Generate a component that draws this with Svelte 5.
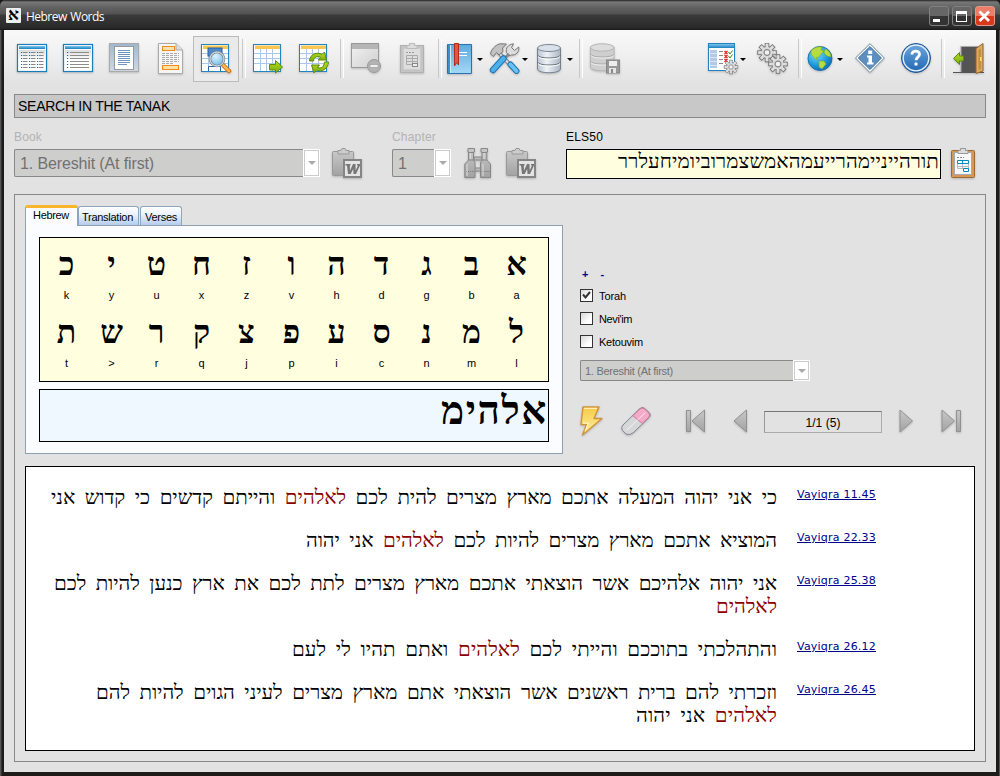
<script>
  const rows = [
    [['כ', 'k'], ['י', 'y'], ['ט', 'u'], ['ח', 'x'], ['ז', 'z'], ['ו', 'v'], ['ה', 'h'], ['ד', 'd'], ['ג', 'g'], ['ב', 'b'], ['א', 'a']],
    [['ת', 't'], ['ש', '>'], ['ר', 'r'], ['ק', 'q'], ['צ', 'j'], ['פ', 'p'], ['ע', 'i'], ['ס', 'c'], ['נ', 'n'], ['מ', 'm'], ['ל', 'l']]
  ];

  const verses = [
    { ref: 'Vayiqra 11.45', lines: [{ w: 726, parts: ['כי אני יהוה המעלה אתכם מארץ מצרים להית לכם ', 'לאלהים', ' והייתם קדשים כי קדוש אני'] }] },
    { ref: 'Vayiqra 22.33', lines: [{ w: 471, parts: ['המוציא אתכם מארץ מצרים להיות לכם ', 'לאלהים', ' אני יהוה'] }] },
    { ref: 'Vayiqra 25.38', lines: [
      { w: 723, parts: ['אני יהוה אלהיכם אשר הוצאתי אתכם מארץ מצרים לתת לכם את ארץ כנען להיות לכם', '', ''] },
      { w: 61, parts: ['', 'לאלהים', ''] }
    ] },
    { ref: 'Vayiqra 26.12', lines: [{ w: 485, parts: ['והתהלכתי בתוככם והייתי לכם ', 'לאלהים', ' ואתם תהיו לי לעם'] }] },
    { ref: 'Vayiqra 26.45', lines: [
      { w: 681, parts: ['וזכרתי להם ברית ראשנים אשר הוצאתי אתם מארץ מצרים לעיני הגוים להיות להם', '', ''] },
      { w: 141, parts: ['', 'לאלהים', ' אני יהוה'] }
    ] }
  ];

  const checks = [['Torah', true, 27], ["Nevi'im", false, 33], ['Ketouvim', false, 44]];

  // Tracks the text so that it spans the given width.
  function fit(node, width) {
    const n = [...node.textContent].length;
    const natural = node.getBoundingClientRect().width;
    node.style.letterSpacing = `${(width - natural) / n}px`;
  }
  const teeth = [0, 45, 90, 135, 180, 225, 270, 315];
  const listRows = [9.5, 12.5, 15.5, 18.5, 21.5, 24.5];
</script>

{#snippet gear(cx, cy, s)}
  <g transform="translate({cx} {cy}) scale({s})">
    {#each teeth as a}<rect x="-1.8" y="-9.5" width="3.6" height="5" fill="#e2e2e2" stroke="#777" stroke-width="1" transform="rotate({a})" />{/each}
    <circle r="6.2" fill="#d8d8d8" stroke="#777" />
    {#each teeth as a}<rect x="-1.3" y="-8.5" width="2.6" height="4" fill="#dedede" transform="rotate({a})" />{/each}
    <circle r="3" fill="#f2f2f2" stroke="#888" stroke-width="1.2" />
  </g>
{/snippet}

{#snippet gridTable()}
  <rect x="1.5" y="1.5" width="27" height="27" fill="#fff" stroke="#2385bd" />
  <rect x="3" y="2.5" width="25" height="3.5" fill="#fac652" />
  <path d="M2 10.5H28M2 15.5H28M2 20.5H28M8.5 6V28M14.5 6V28M20.5 6V28" stroke="#aac8e6" fill="none" />
{/snippet}

{#snippet listFrame()}
  <rect x="1.5" y="1.5" width="29" height="27" fill="#fff" stroke="#1c7db8" stroke-width="1.2" />
  <rect x="3" y="3" width="26" height="3" fill="url(#hdr)" />
  <rect x="3" y="7" width="26" height="20" fill="url(#sheet)" />
{/snippet}

{#snippet pasteWord()}
  <svg width="32" height="32" viewBox="0 0 32 32">
    <rect x="1.5" y="3.5" width="21" height="24" rx="1" fill="url(#gray)" stroke="#999" />
    <path d="M7 6V2.5H10L11 .5H14L15 2.5H18V6Z" fill="#ccc" stroke="#999" />
    <rect x="13" y="12" width="17" height="17" fill="#e4e4e4" stroke="#858585" stroke-width="2" />
    <path d="M14.5 16H19.5V17.5H18.8L19 22.5 22 16H24.5L24.7 22.5 27 17.5H26V16H29V17.5L25 26H22.5L22.2 21 19.7 26H17L16 17.5H14.5Z" fill="#777" />
  </svg>
{/snippet}

{#snippet combo(text, textWidth)}
  <div class="combo-text"><span use:fit={textWidth}>{text}</span></div>
  <div class="combo-btn"><i></i></div>
{/snippet}

<div class="window">
  <svg class="defs" width="0" height="0">
    <defs>
      <linearGradient id="gray" x2="0" y2="1"><stop stop-color="#c8c8c8" /><stop offset="1" stop-color="#a2a2a2" /></linearGradient>
      <linearGradient id="sheet" x2="0" y2="1"><stop stop-color="#dcdcdc" /><stop offset=".5" stop-color="#fff" /></linearGradient>
      <linearGradient id="hdr" x2="0" y2="1"><stop stop-color="#7dc5ee" /><stop offset="1" stop-color="#1c7fc0" /></linearGradient>
      <linearGradient id="sky" x2="0" y2="1"><stop stop-color="#5cabdf" /><stop offset="1" stop-color="#a3d8f5" /></linearGradient>
      <linearGradient id="disk"><stop stop-color="#b9c3d0" /><stop offset=".4" stop-color="#eef2f7" /><stop offset="1" stop-color="#aab5c3" /></linearGradient>
      <linearGradient id="pale" x2="1" y2="1"><stop stop-color="#f2f2f2" /><stop offset="1" stop-color="#cfcfcf" /></linearGradient>
      <linearGradient id="green" x2="0" y2="1"><stop stop-color="#b6dc28" /><stop offset="1" stop-color="#77ad0b" /></linearGradient>
      <linearGradient id="blue" x2="0" y2="1"><stop stop-color="#6fa8dc" /><stop offset="1" stop-color="#1f66b4" /></linearGradient>
      <linearGradient id="page" x2="0" y2="1"><stop stop-color="#9fb8cf" /><stop offset="1" stop-color="#cdd9e4" /></linearGradient>
      <linearGradient id="gold" x2="0" y2="1"><stop stop-color="#f4cb45" /><stop offset="1" stop-color="#fff0a6" /></linearGradient>
      <radialGradient id="sea" cx=".35" cy=".3" r=".8"><stop stop-color="#7fe0ff" /><stop offset=".6" stop-color="#1c98dc" /><stop offset="1" stop-color="#0f62aa" /></radialGradient>
      <radialGradient id="lens" cx=".4" cy=".3" r=".8"><stop stop-color="#dff4ff" /><stop offset="1" stop-color="#62b6e4" /></radialGradient>
    </defs>
  </svg>

  <header class="titlebar">
    <div class="logo">א</div>
    <h1><span use:fit={78}>Hebrew Words</span></h1>
    <div class="win-buttons">
      <b><svg width="19" height="20" viewBox="0 0 19 20"><rect x="4" y="13" width="7" height="3" fill="#fff" /></svg></b>
      <b><svg width="19" height="20" viewBox="0 0 19 20"><path d="M4 5H15V16H4ZM5 8V15H14V8Z" fill="#fff" fill-rule="evenodd" /></svg></b>
      <b class="close"><svg width="19" height="20" viewBox="0 0 19 20"><path d="M4.5 5.5L14 15M14 5.5L4.5 15" stroke="#fff" stroke-width="2.8" /></svg></b>
    </div>
  </header>

  <nav class="toolbar">
    <div class="btn">
      <svg width="32" height="32" viewBox="0 0 32 32">
        {@render listFrame()}
        {#each listRows as y}<path d="M7 {y}H11.500M15 {y}H19.500M23 {y}H27.500" stroke="#888" /><path d="M5 {y}H6.200M13 {y}H14.200M21 {y}H22.200" stroke="#1d5fb0" />{/each}
      </svg>
    </div>
    <div class="btn">
      <svg width="32" height="32" viewBox="0 0 32 32">
        {@render listFrame()}
        {#each listRows as y}<path d="M8 {y}H27" stroke="#8c8c8c" /><path d="M5 {y}H6.200" stroke="#1d5fb0" />{/each}
      </svg>
    </div>
    <div class="btn">
      <svg width="32" height="32" viewBox="0 0 32 32">
        <rect x="1.5" y=".5" width="29" height="28" fill="url(#page)" stroke="#aaa" /><rect x="6.5" y="3.5" width="19" height="23" fill="#fff" stroke="#999" />
        <path d="M10 7.5H22M10 9.5H22M10 11.5H22M10 13.5H22M10 15.5H22M10 17.5H22M10 19.5H22M10 21.5H19" stroke="#6f96be" />
      </svg>
    </div>
    <div class="btn">
      <svg width="32" height="32" viewBox="0 0 32 32">
        <path d="M4.5.5H22L28.5 7V30.5H4.5Z" fill="#f6f6f6" stroke="#aaa" /><path d="M22 .5V7H28.5" fill="#ddd" stroke="#aaa" />
        <rect x="8.5" y="3.5" width="12" height="4" fill="#fde2a6" stroke="#f28a1c" /><rect x="8.5" y="22.5" width="16" height="4" fill="#fde2a6" stroke="#f28a1c" />
        <path d="M8 10.5H25M8 12.5H25M8 14.5H25M8 16.5H25M8 18.5H25M8 20.5H20" stroke="#aaa" stroke-dasharray="3 1" />
      </svg>
    </div>
    <div class="btn active">
      <svg width="32" height="32" viewBox="0 0 32 32">
        {@render gridTable()}
        <rect x="8" y="5" width="14" height="8" fill="#4d88cb" stroke="#245fa5" />
        <path d="M8.5 28V23.5H20.5V28" fill="#fff" stroke="#2765ad" />
        <path d="M23 22L29 28" stroke="#c96d16" stroke-width="4.5" stroke-linecap="round" /><path d="M23 22L29 28" stroke="#ffb54d" stroke-width="2.5" stroke-linecap="round" />
        <circle cx="17" cy="16" r="7" fill="url(#lens)" stroke="#7c8994" stroke-width="2.6" /><circle cx="17" cy="16" r="7" fill="none" stroke="#e2e8ec" />
      </svg>
    </div>
    <div class="sep"></div>
    <div class="btn">
      <svg width="32" height="32" viewBox="0 0 32 32">{@render gridTable()}<path d="M17.5 21.5H23.5V17.5L30.5 24 23.5 30V27H17.5Z" fill="url(#green)" stroke="#5d8a08" /></svg>
    </div>
    <div class="btn">
      <svg width="32" height="32" viewBox="0 0 32 32">
        {@render gridTable()}
        <path d="M11.5 18C12 11 19 8.5 24 11.5L26.5 9 28.5 17H20.5L22.5 14.5C19 12.5 16 14 15.5 18Z" fill="url(#green)" stroke="#5d8a08" />
        <path d="M30.5 19C30 26 24 29.5 18.5 27L16 30 13.5 22H21.5L19.5 24.5C23 26 26 24 26.5 19Z" fill="url(#green)" stroke="#5d8a08" />
      </svg>
    </div>
    <div class="sep"></div>
    <div class="btn">
      <svg width="32" height="32" viewBox="0 0 32 32">
        <rect x="1.5" y=".5" width="27" height="24" fill="url(#pale)" stroke="#999" /><rect x="2" y="1" width="26" height="5" fill="#b5b5b5" />
        <circle cx="24" cy="23" r="6.5" fill="#b3b3b3" stroke="#999" /><rect x="20" y="21.5" width="8" height="3" fill="#eee" stroke="#999" stroke-width=".6" />
      </svg>
    </div>
    <div class="btn">
      <svg width="32" height="32" viewBox="0 0 32 32">
        <rect x="4.5" y="2.5" width="23" height="27" fill="#c4c4c4" stroke="#b0b0b0" /><rect x="7.5" y="5.5" width="17" height="21" fill="#dedede" stroke="#cbcbcb" />
        <path d="M11 5.5V2.5H13.5V.5H18.5V2.5H21V5.5Z" fill="#ddd" stroke="#bbb" /><path d="M10.5 12.5H21.5V21.5H10.5ZM10.5 15.5H21.5M10.5 18.5H21.5M16.5 12V22" fill="none" stroke="#aaa" /><path d="M10 9.5H19" stroke="#999" stroke-dasharray="2 1" /><rect x="16.5" y="20.5" width="5" height="3" fill="#eee" stroke="#888" />
      </svg>
    </div>
    <div class="sep"></div>
    <div class="btn drop">
      <svg width="32" height="32" viewBox="0 0 32 32">
        <path d="M3.5 1.5H27.5V30.5H3.5Z" fill="url(#sky)" stroke="#2672b3" /><path d="M6.5 2V30" stroke="#d1ecfa" /><path d="M4 1.5H6V30H4Z" fill="#3b8fcd" />
        <path d="M10.5.5H14.5V22L12.5 19.5 10.5 23Z" fill="#e8553e" stroke="#b32a1c" /><path d="M15 9.5H23M15 12.5H23" stroke="#fff" />
      </svg><i></i>
    </div>
    <div class="btn drop">
      <svg width="32" height="32" viewBox="0 0 32 32">
        <path d="M10 10L26 27" stroke="#777" stroke-width="4" /><path d="M10 10L26 27" stroke="#ddd" stroke-width="2" />
        <path d="M1.5 11C2 7 6 2 11 .8L17.5 1 13.5 5 14 8.5 10 12 7.5 9.5 4.5 13.5Z" fill="#c2c2c2" stroke="#777" />
        <path d="M21 13L17.5 9.5C16.5 5 19 1.5 24.5.8L22.5 4.5 25.5 7.5 29.8 4C30.5 9 27 12.5 22.5 12Z" fill="#dcdcdc" stroke="#777" />
        <path d="M20 11L13 18" stroke="#888" stroke-width="3" />
        <path d="M21.5 21.5L27.5 28" stroke="#1e74b3" stroke-width="6" stroke-linecap="round" /><path d="M21.5 21.5L27.5 28" stroke="#68c3f3" stroke-width="4" stroke-linecap="round" />
        <path d="M14.5 15.5L4 27" stroke="#1e74b3" stroke-width="6.4" stroke-linecap="round" /><path d="M14.5 15.5L4 27" stroke="#4cb0ea" stroke-width="4.4" stroke-linecap="round" />
      </svg><i></i>
    </div>
    <div class="btn drop">
      <svg width="32" height="32" viewBox="0 0 32 32">
        <path d="M3.5 5V26C3.5 31 26.5 31 26.5 26V5Z" fill="url(#disk)" stroke="#76818e" /><ellipse cx="15" cy="5" rx="11.5" ry="3.5" fill="#dae1ea" stroke="#7d8793" />
        <path d="M3.5 12C4 16 26 16 26.5 12M3.5 19C4 23 26 23 26.5 19" fill="none" stroke="#66717e" /><path d="M4 13.5C5 17 25 17 26 13.5M4 20.5C5 24 25 24 26 20.5" fill="none" stroke="#fff" />
      </svg><i></i>
    </div>
    <div class="sep"></div>
    <div class="btn">
      <svg width="32" height="32" viewBox="0 0 32 32">
        <path d="M1.5 4V24C1.5 29 25 29 25 24V4Z" fill="#cfcfcf" stroke="#b5b5b5" /><ellipse cx="13.2" cy="4.5" rx="11.7" ry="3.7" fill="#ddd" stroke="#b5b5b5" />
        <path d="M1.5 11C2 15 24 15 25 11M1.5 18C2 22 24 22 25 18" fill="none" stroke="#aaa" /><path d="M2 12.5C3 16 24 16 25 12.5M2 19.5C3 23 24 23 25 19.5" fill="none" stroke="#eee" />
        <rect x="17.5" y="17" width="13" height="13" fill="#999" stroke="#888" /><rect x="20" y="18" width="8" height="5" fill="#eee" /><rect x="20" y="25" width="7" height="5" fill="#e5e5e5" /><rect x="22" y="26" width="2" height="4" fill="#888" />
      </svg>
    </div>
    <div class="grow"></div>
    <div class="btn drop">
      <svg width="32" height="32" viewBox="0 0 32 32">
        <rect x="1.5" y=".5" width="26" height="27" fill="#fff" stroke="#2383bc" /><rect x="2" y="1" width="25" height="4" fill="url(#hdr)" /><rect x="3" y="7" width="7" height="18" fill="#b2cae8" /><path d="M3 10.5H10M3 14.5H10M3 18.5H10M3 22.5H10" stroke="#d8e5f4" />
        <path d="M12 8.5H16M12 12.5H16M12 16.5H16M12 20.5H16" stroke="#888" /><path d="M17.5 8L20.5 11M20.5 8L17.5 11M17.5 12L20.5 15M20.5 12L17.5 15M17.5 16L20.5 19M20.5 16L17.5 19" stroke="#e5231b" stroke-width="1.4" /><path d="M21.5 9L23 11 25.5 7.5M21.5 13L23 15 25.5 11.5" fill="none" stroke="#37831c" />
        {@render gear(24, 24, 0.72)}
      </svg><i></i>
    </div>
    <div class="btn"><svg width="32" height="32" viewBox="0 0 32 32">{@render gear(11, 9.5, 0.98)}{@render gear(22, 21, 0.98)}</svg></div>
    <div class="sep"></div>
    <div class="btn drop">
      <svg width="32" height="32" viewBox="0 0 32 32">
        <circle cx="16" cy="15.5" r="12" fill="url(#sea)" stroke="#1c71a9" />
        <path d="M7 8C10 4 15 3.5 18 4L17 7 20 8 17 11 15 14 12 14.5 14 17 11 16 7 11ZM15 18L20 18 22 21 18 26 15 24ZM21 6C25 7 27 11 27 14L23 13 20 10Z" fill="#b7dc3d" stroke="#74a927" stroke-width=".6" />
      </svg><i></i>
    </div>
    <div class="btn">
      <svg width="32" height="32" viewBox="0 0 32 32">
        <path d="M17 .7L31.3 15 17 29.5 2.5 15Z" fill="#fff" stroke="#6c8ba8" stroke-linejoin="round" /><path d="M17 3.5L28.5 15 17 26.6 5.3 15Z" fill="#5c8fc0" stroke="#45779f" />
        <rect x="15.2" y="7.5" width="4" height="3.5" fill="#fff" /><path d="M14 12.5H19V19.5H20.5V21.5H14V19.5H15.5V14.5H14Z" fill="#fff" />
      </svg>
    </div>
    <div class="btn">
      <svg width="32" height="32" viewBox="0 0 32 32">
        <circle cx="17" cy="15" r="14.5" fill="url(#blue)" stroke="#1e5597" /><circle cx="17" cy="15" r="12.8" fill="none" stroke="#eaf3fb" stroke-width="1.3" />
        <path d="M13 11.5C13 6.8 20.5 7.3 20.5 11.3C20.5 14 17 14.3 17 17.3" fill="none" stroke="#fff" stroke-width="2.8" /><rect x="15.5" y="19.5" width="3" height="3" rx=".6" fill="#fff" />
      </svg>
    </div>
    <div class="sep"></div>
    <div class="btn last">
      <svg width="34" height="32" viewBox="0 0 34 32">
        <rect x="10" y="3.5" width="17" height="26" fill="#545454" stroke="#aaa" /><path d="M2 29.5H33" stroke="#555" />
        <path d="M25 5.5L32 .5V28L25 30.5Z" fill="#dcab63" stroke="#93632c" /><path d="M27.5 7L30 5.5V26L27.5 27Z" fill="#c58c42" /><rect x="29" y="14" width="1.5" height="4" fill="#ffe45a" />
        <path d="M12.5 13H8.5V9.5L2.5 15.5 8.5 21.5V18H12.5Z" fill="url(#green)" stroke="#5d8a08" />
      </svg>
    </div>
  </nav>

  <main>
    <h2><span use:fit={152}>SEARCH IN THE TANAK</span></h2>

    <section class="fields">
      <div class="field book"><label class="dim"><span use:fit={28}>Book</span></label><div class="combo big">{@render combo('1. Bereshit (At first)', 134)}</div></div>
      <div class="ficon paste1">{@render pasteWord()}</div>
      <div class="field chapter"><label class="dim"><span use:fit={44}>Chapter</span></label><div class="combo big">{@render combo('1', 9)}</div></div>
      <div class="ficon binoc">
        <svg width="28" height="32" viewBox="0 0 28 32">
          <rect x="10" y="9" width="8" height="3" fill="#bbb" stroke="#888" /><rect x="9" y="20" width="10" height="3" fill="#bbb" stroke="#888" />
          <path d="M4 .5H10.5V4H9.5V12L11 15V29.5H.8V16L4.5 12V4H4ZM17 .5H23.5V4H22.8V12L26.5 16V29.5H16.5V15L18 12V4H17Z" fill="url(#gray)" stroke="#888" />
          <path d="M4 4.5H10M17.5 4.5H23M4.5 12H10M18 12H23" stroke="#888" /><path d="M2 23.5H10.5M17.5 23.5H26" stroke="#777" stroke-dasharray="1 1" /><path d="M3 16V28M19 16V28M6.5 5V11M20 5V11" stroke="#ddd" />
        </svg>
      </div>
      <div class="ficon paste2">{@render pasteWord()}</div>
      <div class="field els"><label><span use:fit={37}>ELS50</span></label><div class="els-box" dir="rtl"><span use:fit={321}>תורהייניימהרייעמהאמשצמרוביומיחעלרר</span></div></div>
      <div class="ficon clip">
        <svg width="26" height="32" viewBox="0 0 26 32">
          <rect x="1.5" y="2.5" width="23" height="27" rx="1" fill="#d49a55" stroke="#9c6a35" /><rect x="4.5" y="4.5" width="17" height="22" fill="#f7f7f7" stroke="#a9a9b0" />
          <path d="M8 5.5V2.5H10.5V.5H15.5V2.5H18V5.5Z" fill="#ddd" stroke="#999" /><path d="M7 9.5H14" stroke="#888" stroke-dasharray="2 1" />
          <path d="M7.5 15V20.5H18.5V12.5M7.5 18.5H18.5M12.5 15V20" fill="none" stroke="#bbb" /><path d="M7.5 12.5H18.5V15.5H7.5ZM12.5 12.5V15.5M13.5 20.5H18.5V23.5H13.5Z" fill="#fff" stroke="#0a87c6" />
        </svg>
      </div>
    </section>

    <section class="work">
      <div class="upper">
        <div class="tabs-block">
          <div class="tabs">
            <div class="tab on"><span use:fit={36}>Hebrew</span></div>
            <div class="tab t2"><span use:fit={51}>Translation</span></div>
            <div class="tab t3"><span use:fit={32}>Verses</span></div>
          </div>
          <div class="tab-page">
            <div class="letters">
              {#each rows as row}
                <div class="letter-row">
                  {#each row as [h, l]}<div class="key"><b>{h}</b><small>{l}</small></div>{/each}
                </div>
              {/each}
            </div>
            <div class="word" dir="rtl"><span use:fit={107}>אלהימ</span></div>
          </div>
        </div>

        <div class="options">
          <div class="pm"><b>+</b><b>-</b></div>
          {#each checks as [name, on, w]}
            <div class="check"><span class="box">{#if on}<svg width="11" height="11" viewBox="0 0 11 11"><path d="M2 4.5L4.5 7.5 9 2" fill="none" stroke="#333" stroke-width="2" /></svg>{/if}</span><span use:fit={w}>{name}</span></div>
          {/each}
          <div class="combo small">{@render combo('1. Bereshit (At first)', 88)}</div>
          <div class="nav">
            <svg class="bolt" width="24" height="32" viewBox="0 0 24 32"><path d="M3 2H19L14 13.5H22L2.5 30 6.5 19.5H1Z" fill="url(#gold)" stroke="#d2913b" stroke-width="1.4" stroke-linejoin="round" /><path d="M4.2 3.3H17M3 18.2H8.3L5 26" stroke="#fff8d0" fill="none" /></svg>
            <svg class="eraser" width="32" height="32" viewBox="0 0 32 32">
              <path d="M20 2.5Q22.5.5 25 2.5L29.5 7Q31 9 29.5 11L13 27Q9.5 29.5 6 28L2.5 24.5Q.5 21.5 3 19Z" fill="#d5d7d9" stroke="#858589" />
              <path d="M20 2.8Q22.5 1 24.7 3L29 7.2Q30.5 9 29 11L22.3 17.5 12.8 9.7Z" fill="#f3abc8" stroke="#c2658e" stroke-width=".8" /><path d="M25.5 6.5L7 24" stroke="#fff" opacity=".7" />
            </svg>
            <svg class="first" width="22" height="25" viewBox="0 0 22 25"><path d="M1.5 1.5H5.5V22.5H1.5ZM19.5 1V23L7 12Z" fill="url(#gray)" stroke="#919191" /></svg>
            <svg class="prev" width="15" height="25" viewBox="0 0 15 25"><path d="M13.5 1V23L1 12Z" fill="url(#gray)" stroke="#919191" /></svg>
            <div class="counter"><span use:fit={35}>1/1 (5)</span></div>
            <svg class="next" width="15" height="25" viewBox="0 0 15 25"><path d="M1 1V23L13.5 12Z" fill="url(#gray)" stroke="#919191" /></svg>
            <svg class="lastp" width="22" height="25" viewBox="0 0 22 25"><path d="M1 1V23L13.5 12ZM15.5 1.5H19.5V22.5H15.5Z" fill="url(#gray)" stroke="#919191" /></svg>
          </div>
        </div>
      </div>

      <div class="results">
        {#each verses as v}
          <div class="verse">
            <div class="verse-text" dir="rtl">
              {#each v.lines as line}
                <div class="line"><span class="run" use:fit={line.w}>{line.parts[0]}<em>{line.parts[1]}</em>{line.parts[2]}</span></div>
              {/each}
            </div>
            <a href="#verse"><span use:fit={79}>{v.ref}</span></a>
          </div>
        {/each}
      </div>
    </section>
  </main>
</div>

<style>
  :global(body) { background: #1c1a1a; }
  * { box-sizing: border-box; }
  span { white-space: pre; }
  .defs { position: absolute; }
  .window {
    width: 1000px; height: 776px; overflow: hidden; padding: 0 4px 4px;
    font: 12px/14px "Liberation Sans", sans-serif; color: #000;
    display: flex; flex-direction: column;
    background: #1e1b1b; border-radius: 6px 6px 0 0;
    box-shadow: inset 1px 0 #555, inset -1px 0 #555, inset 2px 0 #333;
  }
  .titlebar {
    height: 30px; flex: none; margin: 0 -4px; padding: 0 5px 0 6px; display: flex; align-items: center;
    background: linear-gradient(#222 0, #777 2px, #606060 8px, #525252 14px, #3a3a3a 15px, #292929 28px, #191717 30px);
    border-radius: 6px 6px 0 0;
  }
  .logo { width: 15px; height: 15px; margin-top: 1px; border-radius: 1px; background: #eee; font: bold 17px/13px "Liberation Serif", serif; text-align: center; }
  h1 { margin: 3px 0 0 5px; font: 12px/18px "Open Sans", sans-serif; color: #fff; word-spacing: 1px; }
  .win-buttons { margin-left: auto; display: flex; gap: 3px; padding-top: 2px; }
  .win-buttons b { width: 20px; height: 20px; border: 1px solid #808080; border-radius: 3px; overflow: hidden; background: linear-gradient(#666 50%, #333 50%); }
  .win-buttons svg { display: block; margin: -1px 0 0 -1px; }
  .win-buttons b.close { border-color: #e19a8d; background: linear-gradient(#ec7e68 50%, #d9381b 50%); }
  .toolbar { height: 54px; flex: none; display: flex; align-items: center; padding: 4px 2px 0 5px; background: linear-gradient(#f9f9f9, #f0f0f0 45%, #e2e2e2); }
  .btn { width: 46px; height: 46px; flex: none; padding: 6px 0 0 6px; display: flex; border: 1px solid transparent; }
  .btn.active { border-color: #bbb; background: #eaeaea; }
  .btn svg { flex: none; filter: drop-shadow(0 1px 1px #0003); }
  .btn.drop { width: 45px; padding-left: 2px; }
  .btn i { margin: 15px 0 0 1px; width: 0; height: 0; border: 3px solid transparent; border-top: 3px solid #000; border-bottom: 0; }
  .sep { width: 6px; height: 40px; flex: none; padding-left: 3px; }
  .sep::before { content: ''; display: block; width: 2px; height: 39px; border-left: 1px solid #c8c8c8; border-right: 1px solid #fff; }
  .grow { flex: 1; }
  .btn.last { width: 50px; }
  main { flex: 1; background: #e2e2e2; padding: 10px 10px 0; display: flex; flex-direction: column; }
  h2 { margin: 0; height: 24px; flex: none; border: 1px solid #888; background: #c8c8c8; padding-left: 3px; font: 14px/23px "Liberation Sans", sans-serif; }
  .fields { height: 76px; flex: none; display: flex; padding-top: 12px; }
  .field label { display: block; height: 19px; line-height: 14px; }
  .dim { color: #b3b3b3; }
  .book { width: 306px; }
  .chapter { width: 59px; margin-left: 28px; }
  .els { width: 375px; margin-left: 28px; }
  .ficon { padding-top: 18px; }
  .paste1, .paste2 { width: 33px; }
  .paste1 { margin-left: 11px; }
  .binoc { margin-left: 13px; width: 28px; }
  .paste2 { margin-left: 13px; }
  .clip { margin-left: 9px; }
  .ficon svg { display: block; filter: drop-shadow(0 1px 1px #0003); }
  .combo { display: flex; }
  .combo-text { flex: 1; border: 1px solid #888; border-right: 0; border-radius: 2px 0 0 2px; background: #cececd; color: #717171; }
  .combo-btn { width: 17px; border: 1px solid #fff; background: #fff; display: flex; align-items: center; justify-content: center; box-shadow: inset 0 0 0 1px #ccc; }
  .combo-btn i { border: 4px solid transparent; border-top-color: #aaa; border-bottom: 0; }
  .combo.big { height: 28px; }
  .big .combo-text { font-size: 16px; line-height: 27px; padding-left: 5px; }
  .els-box { height: 30px; border: 1px solid #000; background: #ffffe0; font: 20.5px/23px "Liberation Serif", serif; padding-right: 1px; overflow: hidden; }
  .work { height: 568px; border: 1px solid #888; padding: 10px; }
  .upper { display: flex; height: 261px; }
  .tabs-block { width: 538px; }
  .tabs { height: 21px; display: flex; align-items: flex-end; position: relative; font-size: 11px; }
  .tab { height: 19px; margin-bottom: 1px; border: 1px solid #8fa5bf; border-bottom: 0; border-radius: 3px 3px 0 0; background: linear-gradient(#fff, #e8f1fc 45%, #b5cbec); line-height: 20px; padding-left: 4px; }
  .tab.on { width: 53px; height: 21px; margin-bottom: 0; background: #fbfcff; border-top: 3px solid #fbb42c; line-height: 14px; padding-left: 7px; }
  .t2 { width: 61px; padding-left: 3px; }
  .t3 { width: 42px; margin-left: 1px; }
  .tab-page { height: 229px; margin-top: -1px; border: 1px solid #8fa0b5; background: #fbfcff; padding: 11px 13px; }
  .letters { height: 145px; border: 1px solid #000; background: #ffffe0; padding: 10px 0 0 4px; }
  .letter-row { display: flex; height: 68px; }
  .key { width: 45px; display: flex; flex-direction: column; align-items: center; }
  .key b { font: bold 32px/33px "Liberation Serif", serif; height: 40px; }
  .key small { font: 11px/14px "Liberation Sans", sans-serif; }
  .word { margin-top: 7px; height: 53px; border: 1px solid #000; background: #f0f8ff; font: bold 39px/42px "Liberation Serif", serif; }
  .options { margin-left: 17px; padding-top: 63px; font-size: 11px; width: 390px; }
  .pm { display: flex; gap: 12px; padding-left: 2px; color: #00008b; height: 21px; line-height: 12px; }
  .check { display: flex; height: 23px; align-items: flex-start; line-height: 15px; }
  .box { width: 13px; height: 13px; border: 1px solid #333; background: linear-gradient(135deg, #d8d8d8, #fff 70%); margin-right: 6px; }
  .box svg { display: block; }
  .combo.small { width: 230px; height: 21px; margin-top: 2px; }
  .small .combo-text { line-height: 20px; padding-left: 4px; }
  .nav { display: flex; margin-top: 24px; align-items: flex-start; }
  .nav svg { flex: none; filter: drop-shadow(0 1px 1px #0003); }
  .eraser { margin: 1px 0 0 16px; }
  .first { margin: 4px 0 0 33px; }
  .prev { margin: 4px 0 0 26px; }
  .counter { width: 118px; height: 22px; margin: 6px 0 0 16px; border: 1px solid #aaa; border-top-color: #777; border-left-color: #999; text-align: center; font-size: 12px; line-height: 22px; }
  .next { margin: 4px 0 0 17px; }
  .lastp { margin: 4px 0 0 27px; }
  .results { height: 285px; border: 1px solid #000; background: #fff; padding: 19px 0 0 14px; }
  .verse { display: flex; margin-bottom: 20px; }
  .verse-text { width: 737px; }
  .line { height: 23px; font: 20.5px/22px "Liberation Serif", serif; word-spacing: 4.5px; }
  em { font-style: normal; color: #8b0000; }
  .verse a { margin: 1px 0 0 20px; height: 15px; font: 11px/15px "DejaVu Sans", sans-serif; color: #00008b; }
</style>
